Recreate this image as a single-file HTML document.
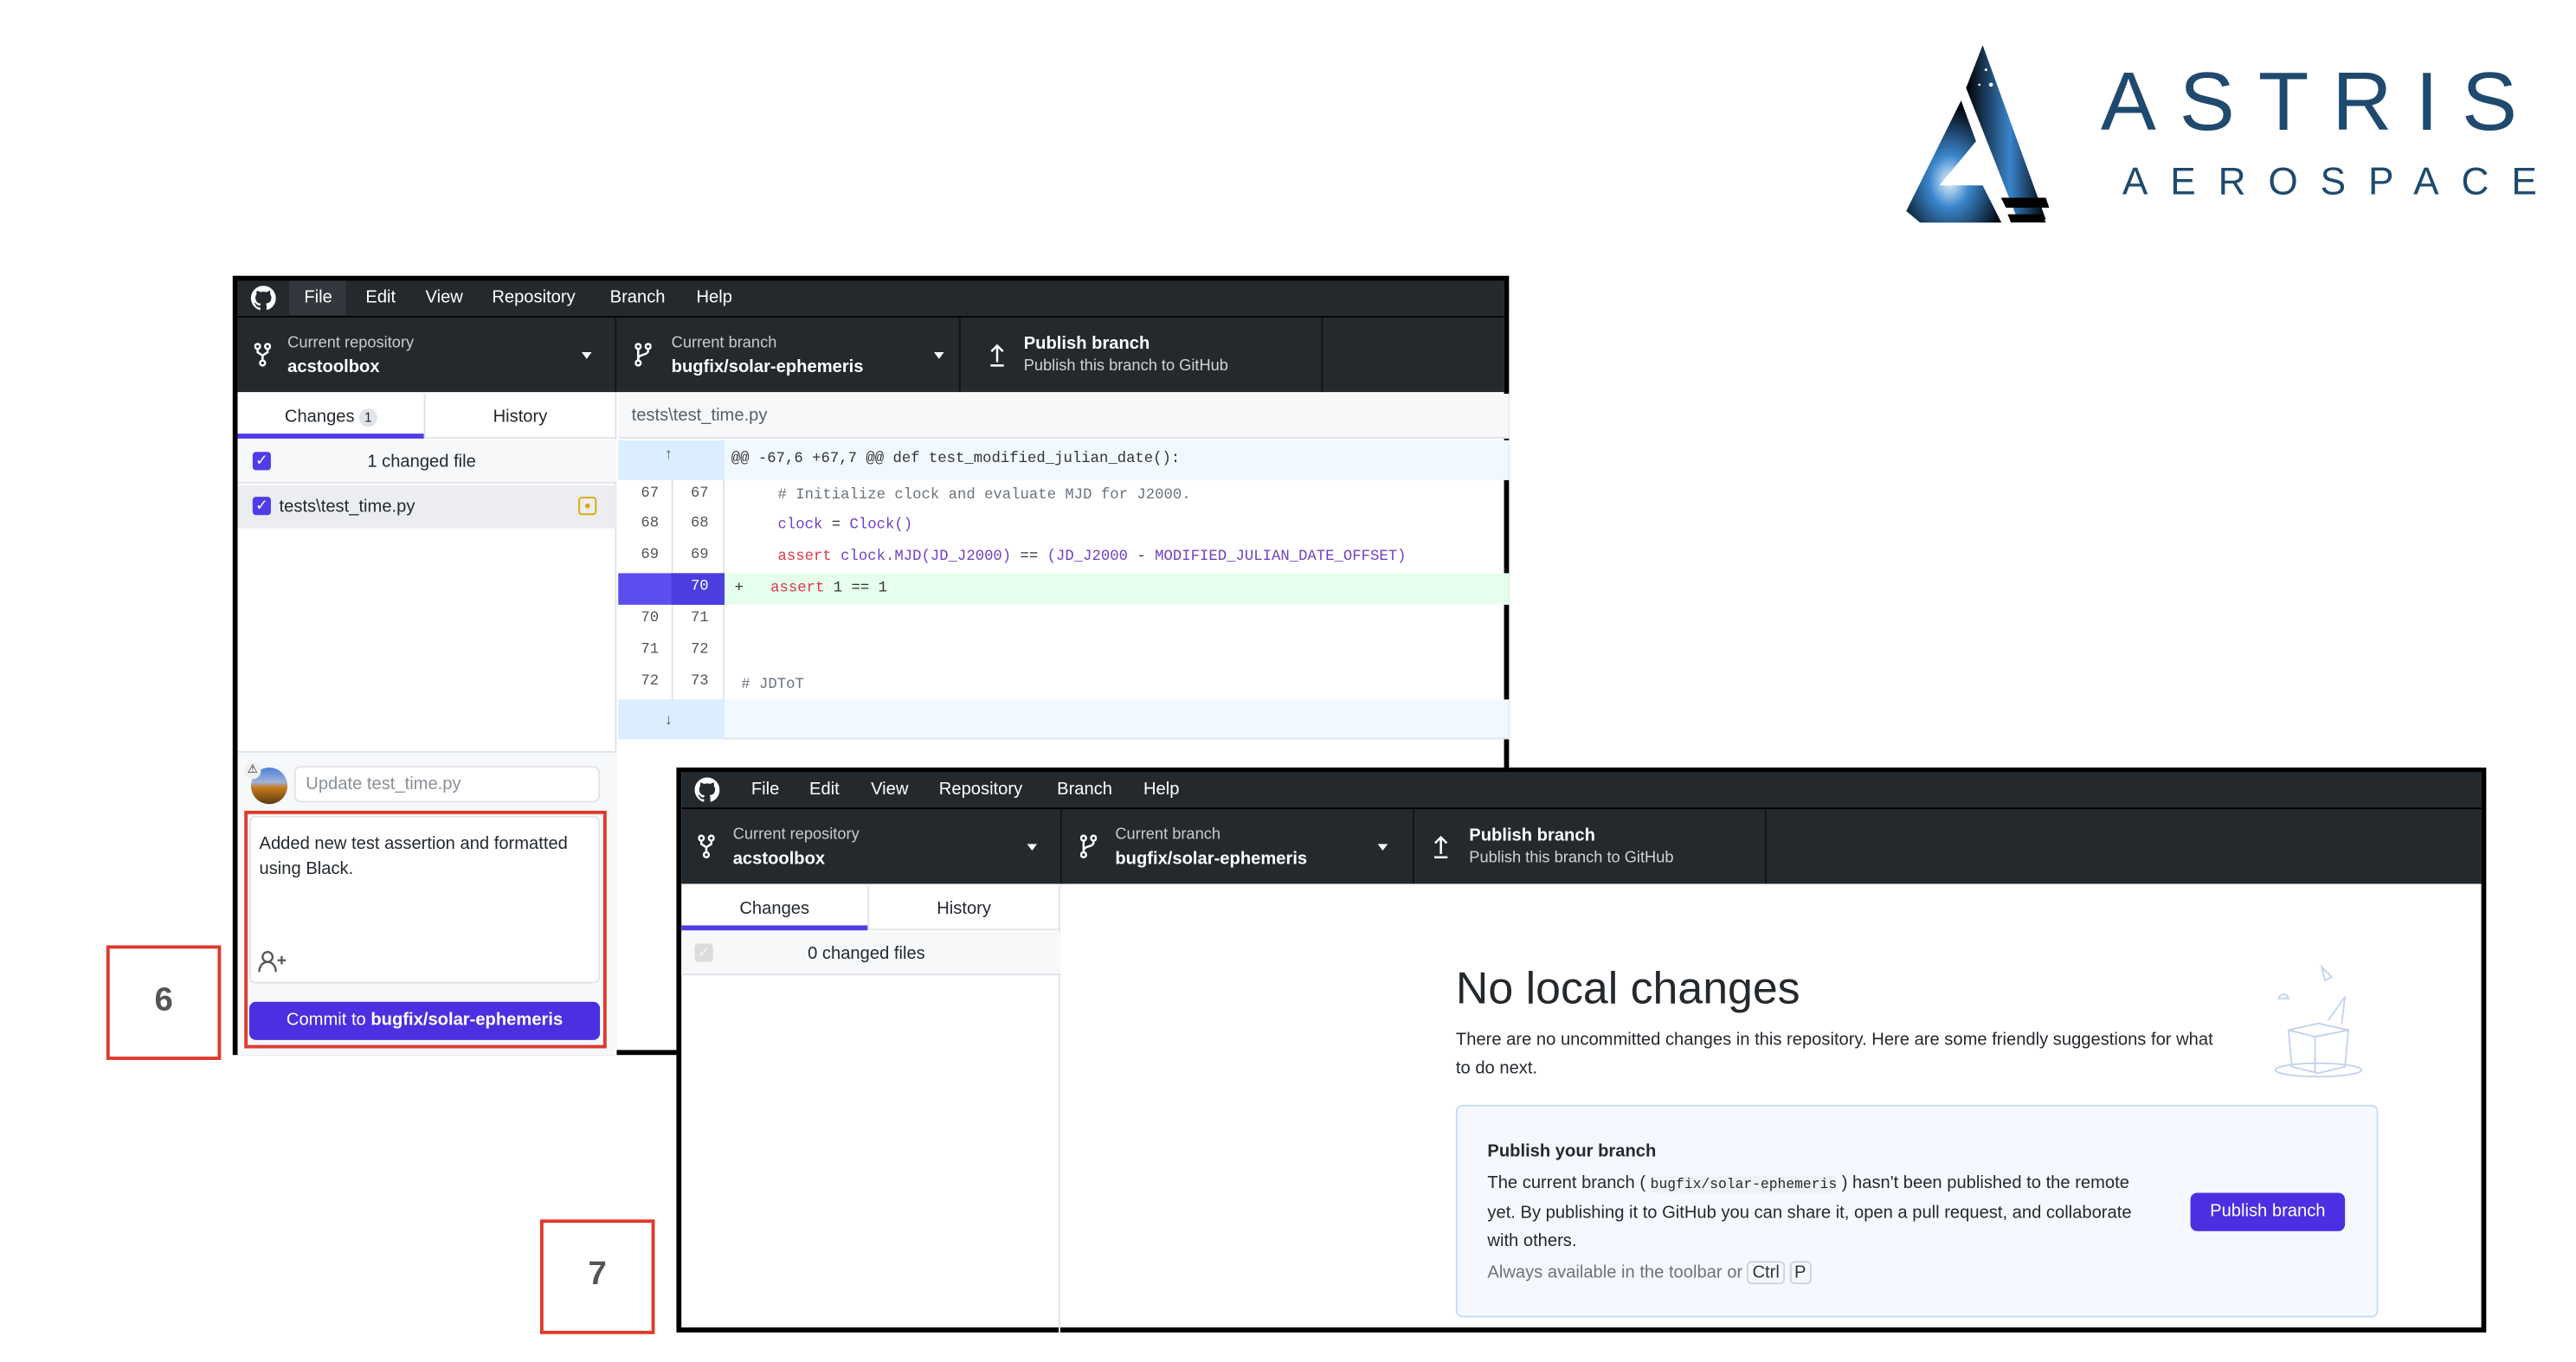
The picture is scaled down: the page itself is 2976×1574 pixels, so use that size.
<!DOCTYPE html>
<html><head><meta charset="utf-8">
<style>
*{box-sizing:border-box;margin:0;padding:0}
html,body{width:2976px;height:1574px;overflow:hidden;background:#fff}
#s{position:absolute;left:0;top:0;width:1550px;height:820px;transform:scale(1.92);transform-origin:0 0;font-family:"Liberation Sans",sans-serif;color:#24292e}
.a{position:absolute}
.win{position:absolute;background:#fff;border:3px solid #000}
.menu{position:absolute;left:0;right:0;top:0;height:21px;background:#24292e;color:#fff;font-size:10.5px}
.menu span{position:absolute;top:4px}
.tb{position:absolute;left:0;right:0;top:21px;height:46px;background:#24292e;border-top:1px solid #000;color:#fff}
.tb .d{position:absolute;top:0;bottom:0;width:1px;background:#141414}
.tb .l1{position:absolute;font-size:9.5px;color:#c8ccd0}
.tb .l2{position:absolute;font-size:10.5px;font-weight:bold;color:#fff}
.tri{position:absolute;width:0;height:0;border-left:3px solid transparent;border-right:3px solid transparent;border-top:4px solid #fff}
.tab{position:absolute;font-size:10.5px;color:#24292e;text-align:center}
.cb{position:absolute;width:11px;height:11px;border-radius:2px;background:#4f3ce8;color:#fff;font-size:9px;line-height:11px;text-align:center}
.code{font-family:"Liberation Mono","DejaVu Sans Mono",monospace;font-size:9px}
.ln{position:absolute;font-family:"Liberation Mono",monospace;font-size:9px;color:#555;width:30px;text-align:center}
.red{position:absolute;border:2px solid #e0392b}
.num{position:absolute;font-size:20px;font-weight:bold;color:#555;text-align:center;width:100%}
</style></head><body><div id="s">

<!-- Logo -->
<svg class="a" style="left:1145px;top:22px" width="110" height="112" viewBox="0 0 110 112">
<defs>
<radialGradient id="g1" cx="0.45" cy="0.65" r="0.6"><stop offset="0" stop-color="#e8f4ff"/><stop offset="0.35" stop-color="#3a86cc"/><stop offset="1" stop-color="#02060c"/></radialGradient>
<linearGradient id="g2" x1="0" y1="0" x2="1" y2="0"><stop offset="0" stop-color="#000"/><stop offset="0.55" stop-color="#3a84cc"/><stop offset="1" stop-color="#000"/></linearGradient>
</defs>
<polygon points="48,6 38,36 69,128 86,128" fill="url(#g2)" transform="scale(1,0.86)"/>
<polygon points="35,55 2,150 12,162 60,162 48,128 22,128 44,90" fill="url(#g1)" transform="scale(1,0.7)"/>
<polygon points="59,97 86,97 88,103 62,103" fill="#000"/>
<polygon points="63,107 84,107 86,112 65,112" fill="#000"/>
<circle cx="50" cy="20" r="0.8" fill="#fff"/><circle cx="53" cy="29" r="1.2" fill="#fff"/><circle cx="46" cy="29" r="0.7" fill="#fff"/>
</svg>
<div class="a" style="left:1264px;top:32px;font-size:50px;letter-spacing:14px;color:#1f4a6e;font-weight:300">ASTRIS</div>
<div class="a" style="left:1277px;top:96px;font-size:23px;letter-spacing:13.5px;color:#1f4a6e">AEROSPACE</div>

<!-- Window 1 -->
<div class="win" style="left:140px;top:166px;width:768px;height:469px">
 <div class="menu">
  <svg class="a" style="left:8px;top:3px" width="15" height="15" viewBox="0 0 16 16"><path fill="#fff" d="M8 0C3.6 0 0 3.6 0 8c0 3.5 2.3 6.5 5.5 7.6.4.1.5-.2.5-.4v-1.4c-2.2.5-2.7-1-2.7-1-.4-.9-.9-1.2-.9-1.2-.7-.5.1-.5.1-.5.8.1 1.2.8 1.2.8.7 1.2 1.9.9 2.3.7.1-.5.3-.9.5-1.1-1.8-.2-3.6-.9-3.6-4 0-.9.3-1.6.8-2.1-.1-.2-.4-1 .1-2.1 0 0 .7-.2 2.2.8.6-.2 1.3-.3 2-.3s1.4.1 2 .3c1.5-1 2.2-.8 2.2-.8.4 1.1.2 1.9.1 2.1.5.6.8 1.3.8 2.1 0 3.1-1.9 3.7-3.6 3.9.3.3.5.8.5 1.5v2.2c0 .2.1.5.6.4C13.7 14.5 16 11.5 16 8c0-4.4-3.6-8-8-8z"/></svg>
  <div class="a" style="left:31px;top:0;width:34px;height:21px;background:#33383e"></div>
  <span style="left:40px">File</span><span style="left:77px">Edit</span><span style="left:113px">View</span><span style="left:153px">Repository</span><span style="left:224px">Branch</span><span style="left:276px">Help</span>
 </div>
 <div class="tb">
  <svg class="a" style="left:10px;top:15px" width="10" height="15" viewBox="0 0 10 15"><g fill="none" stroke="#fff" stroke-width="1.3"><circle cx="2" cy="2.5" r="1.5"/><circle cx="8" cy="2.5" r="1.5"/><circle cx="5" cy="12.5" r="1.5"/><path d="M2 4v2l3 2l3-2V4M5 8v3"/></g></svg>
  <div class="l1" style="left:30px;top:10px">Current repository</div><div class="l2" style="left:30px;top:24px">acstoolbox</div>
  <div class="tri" style="left:207px;top:21px"></div>
  <div class="d" style="left:227px"></div>
  <svg class="a" style="left:239px;top:15px" width="10" height="15" viewBox="0 0 10 15"><g fill="none" stroke="#fff" stroke-width="1.3"><circle cx="2" cy="2.5" r="1.5"/><circle cx="8" cy="2.5" r="1.5"/><circle cx="2" cy="12.5" r="1.5"/><path d="M2 4v7M8 4v1c0 3-6 2-6 5"/></g></svg>
  <div class="l1" style="left:261px;top:10px">Current branch</div><div class="l2" style="left:261px;top:24px">bugfix/solar-ephemeris</div>
  <div class="tri" style="left:419px;top:21px"></div>
  <div class="d" style="left:434px"></div>
  <svg class="a" style="left:452px;top:15px" width="10" height="15" viewBox="0 0 10 15"><path d="M5 12V2M1.5 5.5L5 2l3.5 3.5M1 14h8" fill="none" stroke="#fff" stroke-width="1.3"/></svg>
  <div class="l2" style="left:473px;top:10px">Publish branch</div><div class="l1" style="left:473px;top:24px;color:#d0d4d8">Publish this branch to GitHub</div>
  <div class="d" style="left:652px"></div>
 </div>
 <div class="a" style="left:0;top:68px;width:228px;height:398px;background:#fff;border-right:1px solid #e1e4e8"></div>
 <div class="a" style="left:0;top:68px;width:228px;height:27px;border-bottom:1px solid #e1e4e8"></div>
 <div class="a" style="left:112px;top:68px;width:1px;height:27px;background:#e1e4e8"></div>
 <div class="tab" style="left:0;top:76px;width:112px">Changes <span style="display:inline-block;background:#e1e4e8;border-radius:7px;font-size:8px;padding:0 3px;line-height:11px">1</span></div>
 <div class="a" style="left:0;top:92px;width:112px;height:3px;background:#4f3ce8"></div>
 <div class="tab" style="left:112px;top:76px;width:116px">History</div>
 <div class="a" style="left:0;top:96px;width:228px;height:26px;background:#f6f8fa;border-bottom:1px solid #e1e4e8"></div>
 <div class="cb" style="left:9px;top:103px">✓</div>
 <div class="a" style="left:78px;top:103px;font-size:10.5px">1 changed file</div>
 <div class="a" style="left:0;top:123px;width:228px;height:26px;background:#ebedf0"></div>
 <div class="cb" style="left:9px;top:130px">✓</div>
 <div class="a" style="left:25px;top:130px;font-size:10.5px">tests\test_time.py</div>
 <div class="a" style="left:205px;top:130px;width:11px;height:11px;border:1px solid #dbab09;border-radius:2px"><div style="width:3px;height:3px;background:#dbab09;border-radius:50%;margin:3px auto"></div></div>
 <div class="a" style="left:0;top:283px;width:228px;height:183px;background:#f6f8fa;border-top:1px solid #e1e4e8"></div>
 <div class="a" style="left:8px;top:293px;width:22px;height:22px;border-radius:50%;background:linear-gradient(#4e80d8 0,#9fb4d8 40%,#c67a1a 55%,#5b3a12 100%)"></div>
 <div class="a" style="left:4px;top:290px;width:10px;height:10px;border-radius:50%;background:#f0f0f0;font-size:7px;text-align:center;line-height:10px">⚠</div>
 <div class="a" style="left:34px;top:292px;width:184px;height:22px;background:#fff;border:1px solid #e1e4e8;border-radius:4px;font-size:10.5px;color:#8a9099;padding:4px 6px">Update test_time.py</div>
 <div class="red" style="left:4px;top:319px;width:218px;height:143px"></div>
 <div class="a" style="left:7px;top:322px;width:211px;height:101px;background:#fff;border:1px solid #e1e4e8;border-radius:4px;font-size:10.5px;line-height:15px;padding:9px 5px">Added new test assertion and formatted using Black.</div>
 <svg class="a" style="left:12px;top:403px" width="18" height="14" viewBox="0 0 18 14"><g fill="none" stroke="#555" stroke-width="1.2"><circle cx="6" cy="4" r="3"/><path d="M1 13c0-4 2.5-6 5-6s5 2 5 6M12 6h5M14.5 3.5v5"/></g></svg>
 <div class="a" style="left:7px;top:434px;width:211px;height:23px;background:#4b2fe0;border-radius:4px;color:#fff;font-size:10.5px;text-align:center;line-height:23px">Commit to <b>bugfix/solar-ephemeris</b></div>
 <div class="a" style="left:229px;top:68px;width:536px;height:27px;background:#f6f8fa;border-bottom:1px solid #e1e4e8;font-size:10.5px;color:#586069;padding:7px 8px">tests\test_time.py</div>
 <div class="a" style="left:229px;top:96px;width:64px;height:24px;background:#dbedff"></div>
 <div class="a" style="left:293px;top:96px;width:472px;height:24px;background:#f1f8ff"></div>
 <div class="a code" style="left:297px;top:102px;color:#333">@@ -67,6 +67,7 @@ def test_modified_julian_date():</div>
 <div class="a" style="left:257px;top:99px;font-size:9px;color:#555">↑</div>
 <div class="a" style="left:261px;top:120px;width:1px;height:156px;background:#e1e4e8"></div>
 <div class="a" style="left:292px;top:120px;width:1px;height:156px;background:#e1e4e8"></div>
 <div class="ln" style="left:233px;top:123px">67</div><div class="ln" style="left:263px;top:123px">67</div>
 <div class="a code" style="left:325px;top:124px;color:#6a737d"># Initialize clock and evaluate MJD for J2000.</div>
 <div class="ln" style="left:233px;top:141px">68</div><div class="ln" style="left:263px;top:141px">68</div>
 <div class="a code" style="left:325px;top:142px;color:#6f42c1">clock <span style="color:#333">=</span> Clock()</div>
 <div class="ln" style="left:233px;top:160px">69</div><div class="ln" style="left:263px;top:160px">69</div>
 <div class="a code" style="left:325px;top:161px;color:#6f42c1"><span style="color:#d73a49">assert</span> clock.MJD(JD_J2000) <span style="color:#333">==</span> (JD_J2000 <span style="color:#333">-</span> MODIFIED_JULIAN_DATE_OFFSET)</div>
 <div class="a" style="left:229px;top:176px;width:64px;height:19px;background:#5b4ff0"></div>
 <div class="a" style="left:261px;top:176px;width:32px;height:19px;background:#4a3ee0"></div>
 <div class="ln" style="left:263px;top:179px;color:#fff">70</div>
 <div class="a" style="left:293px;top:176px;width:472px;height:19px;background:#e6ffec"></div>
 <div class="a code" style="left:299px;top:180px;color:#333">+ &nbsp;&nbsp;<span style="color:#d73a49">assert</span> 1 == 1</div>
 <div class="ln" style="left:233px;top:198px">70</div><div class="ln" style="left:263px;top:198px">71</div>
 <div class="ln" style="left:233px;top:217px">71</div><div class="ln" style="left:263px;top:217px">72</div>
 <div class="ln" style="left:233px;top:236px">72</div><div class="ln" style="left:263px;top:236px">73</div>
 <div class="a code" style="left:303px;top:238px;color:#6a737d"># JDToT</div>
 <div class="a" style="left:229px;top:252px;width:64px;height:24px;background:#dbedff"></div>
 <div class="a" style="left:293px;top:252px;width:472px;height:24px;background:#f1f8ff;border-bottom:1px solid #e1e4e8"></div>
 <div class="a" style="left:257px;top:259px;font-size:9px;color:#555">↓</div>
</div>

<!-- Window 2 -->
<div class="win" style="left:407px;top:462px;width:1089px;height:340px">
 <div class="menu">
  <svg class="a" style="left:8px;top:3px" width="15" height="15" viewBox="0 0 16 16"><path fill="#fff" d="M8 0C3.6 0 0 3.6 0 8c0 3.5 2.3 6.5 5.5 7.6.4.1.5-.2.5-.4v-1.4c-2.2.5-2.7-1-2.7-1-.4-.9-.9-1.2-.9-1.2-.7-.5.1-.5.1-.5.8.1 1.2.8 1.2.8.7 1.2 1.9.9 2.3.7.1-.5.3-.9.5-1.1-1.8-.2-3.6-.9-3.6-4 0-.9.3-1.6.8-2.1-.1-.2-.4-1 .1-2.1 0 0 .7-.2 2.2.8.6-.2 1.3-.3 2-.3s1.4.1 2 .3c1.5-1 2.2-.8 2.2-.8.4 1.1.2 1.9.1 2.1.5.6.8 1.3.8 2.1 0 3.1-1.9 3.7-3.6 3.9.3.3.5.8.5 1.5v2.2c0 .2.1.5.6.4C13.7 14.5 16 11.5 16 8c0-4.4-3.6-8-8-8z"/></svg>
  <span style="left:42px">File</span><span style="left:77px">Edit</span><span style="left:114px">View</span><span style="left:155px">Repository</span><span style="left:226px">Branch</span><span style="left:278px">Help</span>
 </div>
 <div class="tb">
  <svg class="a" style="left:10px;top:15px" width="10" height="15" viewBox="0 0 10 15"><g fill="none" stroke="#fff" stroke-width="1.3"><circle cx="2" cy="2.5" r="1.5"/><circle cx="8" cy="2.5" r="1.5"/><circle cx="5" cy="12.5" r="1.5"/><path d="M2 4v2l3 2l3-2V4M5 8v3"/></g></svg>
  <div class="l1" style="left:31px;top:10px">Current repository</div><div class="l2" style="left:31px;top:24px">acstoolbox</div>
  <div class="tri" style="left:208px;top:21px"></div>
  <div class="d" style="left:228px"></div>
  <svg class="a" style="left:240px;top:15px" width="10" height="15" viewBox="0 0 10 15"><g fill="none" stroke="#fff" stroke-width="1.3"><circle cx="2" cy="2.5" r="1.5"/><circle cx="8" cy="2.5" r="1.5"/><circle cx="2" cy="12.5" r="1.5"/><path d="M2 4v7M8 4v1c0 3-6 2-6 5"/></g></svg>
  <div class="l1" style="left:261px;top:10px">Current branch</div><div class="l2" style="left:261px;top:24px">bugfix/solar-ephemeris</div>
  <div class="tri" style="left:419px;top:21px"></div>
  <div class="d" style="left:440px"></div>
  <svg class="a" style="left:452px;top:15px" width="10" height="15" viewBox="0 0 10 15"><path d="M5 12V2M1.5 5.5L5 2l3.5 3.5M1 14h8" fill="none" stroke="#fff" stroke-width="1.3"/></svg>
  <div class="l2" style="left:474px;top:10px">Publish branch</div><div class="l1" style="left:474px;top:24px;color:#d0d4d8">Publish this branch to GitHub</div>
  <div class="d" style="left:652px"></div>
 </div>
 <div class="a" style="left:0;top:68px;width:228px;height:269px;border-right:1px solid #e1e4e8"></div>
 <div class="a" style="left:0;top:68px;width:228px;height:27px;border-bottom:1px solid #e1e4e8"></div>
 <div class="a" style="left:112px;top:68px;width:1px;height:27px;background:#e1e4e8"></div>
 <div class="tab" style="left:0;top:76px;width:112px">Changes</div>
 <div class="a" style="left:0;top:92px;width:112px;height:3px;background:#4f3ce8"></div>
 <div class="tab" style="left:112px;top:76px;width:116px">History</div>
 <div class="a" style="left:0;top:96px;width:228px;height:26px;background:#f6f8fa;border-bottom:1px solid #e1e4e8"></div>
 <div class="cb" style="left:8px;top:103px;background:#dcdcdc;color:#f4f4f4">✓</div>
 <div class="a" style="left:76px;top:103px;font-size:10.5px">0 changed files</div>
 <div class="a" style="left:466px;top:115px;font-size:27px;font-weight:300;color:#24292e">No local changes</div>
 <div class="a" style="left:466px;top:153px;width:460px;font-size:10.5px;line-height:17px">There are no uncommitted changes in this repository. Here are some friendly suggestions for what to do next.</div>
 <svg class="a" style="left:953px;top:113px" width="70" height="72" viewBox="0 0 70 72"><g fill="none" stroke="#c3d3ee" stroke-width="1"><path d="M34 4l6 6l-4 2zM8 23c2-4 5-3 6 0zM14 42l18-4l18 4l-2 22l-16 4l-16-4zM14 42l16 4l20-4M30 46v22M38 36l10-14l-2 16"/><ellipse cx="32" cy="66" rx="26" ry="4"/></g></svg>
 <div class="a" style="left:466px;top:200px;width:555px;height:128px;background:#f6f8ff;border:1px solid #c8dcfa;border-radius:4px"></div>
 <div class="a" style="left:485px;top:222px;font-size:10.5px;font-weight:bold">Publish your branch</div>
 <div class="a" style="left:485px;top:239px;width:395px;font-size:10.5px;line-height:17px">The current branch ( <span class="code" style="background:#eef1f5;font-size:8.5px">bugfix/solar-ephemeris</span> ) hasn't been published to the remote yet. By publishing it to GitHub you can share it, open a pull request, and collaborate with others.</div>
 <div class="a" style="left:485px;top:295px;font-size:10.5px;color:#6a737d">Always available in the toolbar or <span style="border:1px solid #d1d5da;border-radius:3px;padding:0 2px;color:#333">Ctrl</span> <span style="border:1px solid #d1d5da;border-radius:3px;padding:0 2px;color:#333">P</span></div>
 <div class="a" style="left:908px;top:253px;width:93px;height:23px;background:#4b2fe0;border-radius:4px;color:#fff;font-size:10.5px;text-align:center;line-height:23px">Publish branch</div>
</div>

<div class="red" style="left:64px;top:569px;width:69px;height:69px"><div class="num" style="top:20px">6</div></div>
<div class="red" style="left:325px;top:734px;width:69px;height:69px"><div class="num" style="top:20px">7</div></div>

</div></body></html>
